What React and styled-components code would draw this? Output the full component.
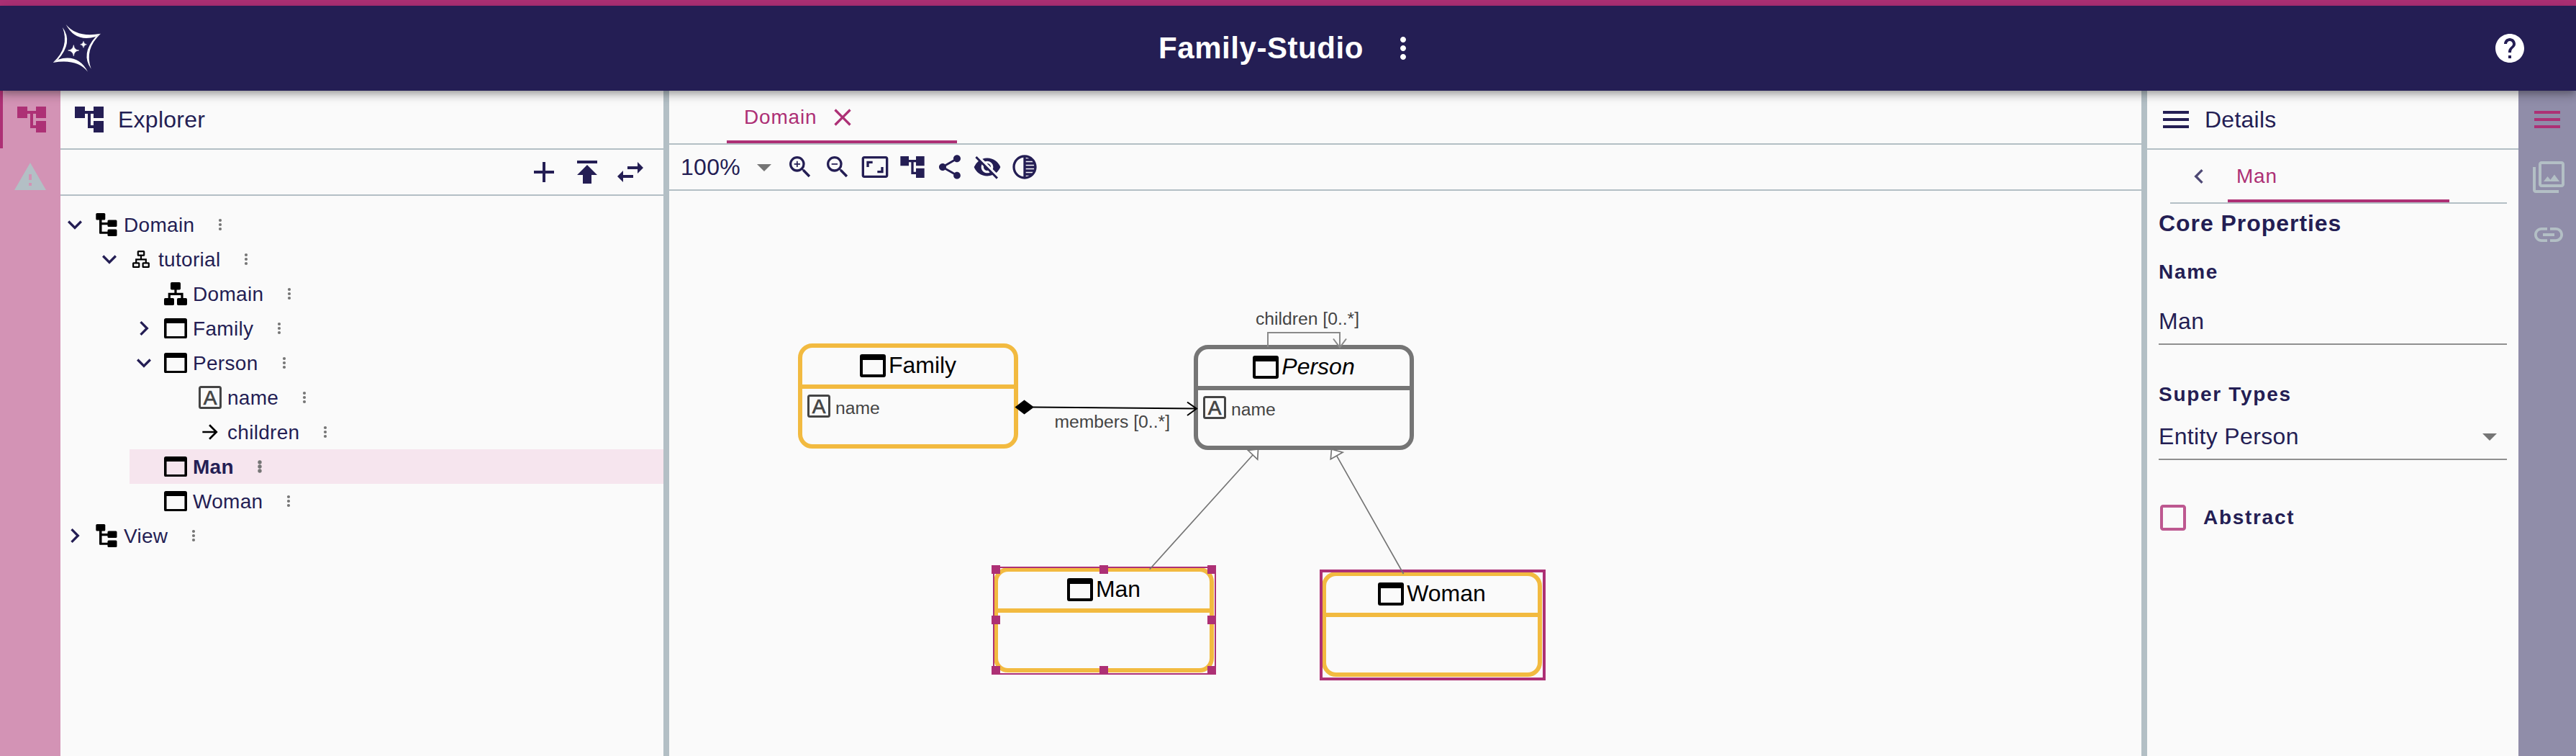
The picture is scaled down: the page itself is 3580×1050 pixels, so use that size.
import React from 'react';
import styled, { createGlobalStyle, css } from 'styled-components';
import {
  MdAccountTree, MdWarning, MdPublish, MdSwapHoriz, MdAdd, MdExpandMore, MdChevronRight,
  MdChevronLeft, MdMoreVert, MdHelp, MdClose, MdZoomIn, MdZoomOut, MdAspectRatio, MdShare,
  MdVisibilityOff, MdTonality, MdMenu, MdArrowDropDown, MdArrowForward, MdCheckBoxOutlineBlank,
} from 'react-icons/md';

const NAVY = '#241e54';
const PINK = '#ad3075';
const LINE = '#b3bfc5';
const BG = '#fafafa';
const GRAY = '#757575';
const YELLOW = '#f2ba40';
const INK = '#444444';

const GlobalStyle = createGlobalStyle`
  * { box-sizing: border-box; }
  body {
    margin: 0;
    background: ${BG};
    color: ${NAVY};
    font-family: Helvetica, "Liberation Sans", Arial, sans-serif;
    overflow: hidden;
  }
  svg { display: block; flex: none; }
`;

/* ---------- shell ---------- */

const Page = styled.div`
  display: flex;
  flex-direction: column;
  width: 3580px;
  height: 1050px;
  overflow: hidden;
`;

const TopStripe = styled.div`
  flex: none;
  height: 8px;
  background: ${PINK};
`;

const AppBar = styled.header`
  position: relative;
  z-index: 2;
  flex: none;
  display: grid;
  grid-template-columns: 1fr auto 1fr;
  align-items: center;
  height: 118px;
  padding: 0 68px 0 72px;
  background: ${NAVY};
  color: #fff;
  box-shadow: 0 4px 8px -2px rgba(0, 0, 0, 0.2), 0 8px 10px rgba(0, 0, 0, 0.14),
    0 2px 20px rgba(0, 0, 0, 0.12);
`;

const ProjectTitle = styled.div`
  display: flex;
  align-items: center;
  gap: 31px;
  font-size: 42px;
  font-weight: 700;
  letter-spacing: 0.55px;
  line-height: 64px;
`;

const HelpSlot = styled.div`
  justify-self: end;
`;

const Workbench = styled.main`
  flex: 1;
  display: flex;
  min-height: 0;
`;

const SideBar = styled.nav`
  flex: none;
  width: ${({ $right }) => ($right ? 80 : 84)}px;
  overflow: hidden;
  display: flex;
  flex-direction: column;
  background: ${({ $right }) => ($right ? '#908da9' : '#d393b5')};
`;

const SideButton = styled.div`
  flex: none;
  width: 84px;
  height: 80px;
  display: flex;
  align-items: center;
  justify-content: center;
  color: ${({ $active }) => ($active ? PINK : LINE)};
  ${({ $active, $right }) => $active && css`border-${$right ? 'right' : 'left'}: 4px solid ${PINK};`}
`;

const Splitter = styled.div`
  flex: none;
  width: 8px;
  background: ${LINE};
`;

const Panel = styled.section`
  flex: none;
  width: ${({ $width }) => $width}px;
  display: flex;
  flex-direction: column;
`;

const PanelHeader = styled.div`
  flex: none;
  display: flex;
  align-items: center;
  gap: 16px;
  height: 82px;
  padding-left: 16px;
  border-bottom: 2px solid ${LINE};
  font-size: 32px;
  letter-spacing: 0.25px;
`;

/* ---------- explorer ---------- */

const ExplorerToolbar = styled.div`
  flex: none;
  display: flex;
  justify-content: flex-end;
  align-items: center;
  gap: 12px;
  height: 64px;
  padding-right: 22px;
  border-bottom: 2px solid ${LINE};
`;

const Tree = styled.div`
  padding-top: 16px;
`;

const TreeRow = styled.div`
  display: flex;
  align-items: center;
  height: 48px;
  margin-left: ${({ $depth }) => $depth * 48}px;
  background: ${({ $selected }) => ($selected ? '#f6e5ee' : 'transparent')};
  font-weight: ${({ $selected }) => ($selected ? 700 : 400)};
  font-size: 28px;
  letter-spacing: 0.3px;
`;

const Toggle = styled.span`
  width: 48px;
  flex: none;
`;

const TreeIcon = styled.span`
  display: flex;
  justify-content: center;
  width: 32px;
  margin-right: 8px;
  color: #000;
`;

const TreeLabel = styled.span`
  margin-right: 24px;
  padding-top: 1px;
  line-height: 32px;
`;

/* ---------- editor ---------- */

const Editor = styled.section`
  flex: 1;
  display: flex;
  flex-direction: column;
  min-width: 0;
`;

const EditorTabs = styled.div`
  flex: none;
  display: flex;
  height: 75px;
  padding-left: 80px;
  border-bottom: 2px solid ${LINE};
`;

const Tab = styled.div`
  display: flex;
  align-items: center;
  gap: ${({ $gap }) => $gap || 0}px;
  width: ${({ $width }) => $width}px;
  height: 73px;
  padding: 4px 0 0 ${({ $pad }) => $pad}px;
  border-bottom: 4px solid ${PINK};
  color: ${PINK};
  font-size: 28px;
  letter-spacing: 0.8px;
`;

const EditorToolbar = styled.div`
  flex: none;
  display: flex;
  align-items: center;
  gap: 12px;
  height: 64px;
  padding-left: 16px;
  border-bottom: 2px solid ${LINE};
`;

const ZoomSelect = styled.div`
  display: flex;
  align-items: center;
  justify-content: space-between;
  width: 140px;
  margin-right: -6px;
  font-size: 32px;
  letter-spacing: 0.3px;
  svg { color: ${GRAY}; }
`;

/* ---------- diagram ---------- */

const Canvas = styled.div`
  position: relative;
  flex: 1;
  overflow: hidden;
`;

const Edges = styled.svg`
  position: absolute;
  inset: 0;
`;

const EdgeLabel = styled.div`
  position: absolute;
  left: ${({ $x }) => $x}px;
  top: ${({ $y }) => $y}px;
  font-size: 24.7px;
  line-height: 30px;
  white-space: nowrap;
  color: ${INK};
`;

const NodeBox = styled.div`
  position: absolute;
  left: ${({ $x }) => $x}px;
  top: ${({ $y }) => $y}px;
  width: 306px;
  height: 146px;
  border: 6px solid ${({ $color }) => $color};
  border-radius: 20px;
  background: ${BG};
`;

const NodeTitle = styled.div`
  display: flex;
  align-items: center;
  justify-content: center;
  gap: 4px;
  height: 57px;
  padding-bottom: 2px;
  border-bottom: 6px solid ${({ $color }) => $color};
  color: #000;
  font-size: 32px;
  font-style: ${({ $italic }) => ($italic ? 'italic' : 'normal')};
`;

const Attribute = styled.div`
  display: flex;
  align-items: center;
  gap: 7.5px;
  padding: 7px 0 0 6.5px;
  font-size: 24.7px;
  color: ${INK};
  span { padding-top: 6px; line-height: 28px; }
`;

const Outline = styled.div`
  position: absolute;
  left: ${({ $x }) => $x}px;
  top: ${({ $y }) => $y}px;
  width: ${({ $w }) => $w}px;
  height: ${({ $h }) => $h}px;
  border: ${({ $line }) => $line}px solid ${PINK};
`;

const Handle = styled.i`
  position: absolute;
  left: ${({ $x }) => $x}px;
  top: ${({ $y }) => $y}px;
  width: 12px;
  height: 12px;
  background: ${PINK};
`;

/* ---------- details ---------- */

const DetailsTabs = styled.div`
  flex: none;
  display: flex;
  height: 75px;
  margin: 0 16px 0 32px;
  border-bottom: 2px solid ${LINE};
`;

const ScrollButton = styled.div`
  display: flex;
  align-items: center;
  justify-content: center;
  width: 80px;
  opacity: 0.8;
`;

const Form = styled.div`
  display: flex;
  flex-direction: column;
  padding: 0 16px;
`;

const GroupTitle = styled.h2`
  margin: 0 0 21px;
  font-size: 32px;
  line-height: 54px;
  letter-spacing: 0.95px;
`;

const FieldLabel = styled.label`
  font-size: 28px;
  font-weight: 700;
  line-height: 40px;
  letter-spacing: 1.7px;
`;

const Field = styled.div`
  display: flex;
  align-items: center;
  justify-content: space-between;
  height: 64px;
  margin: ${({ $top, $bottom }) => `${$top}px 0 ${$bottom}px`};
  border-bottom: 2px solid #8f8f8f;
  font-size: 32px;
  letter-spacing: 0.35px;
  svg { color: ${GRAY}; }
`;

const CheckRow = styled.div`
  display: flex;
  align-items: center;
  gap: 18px;
  height: 48px;
  margin-left: -4px;
  svg { color: #bd5890; }
`;

/* ---------- drawn icons ---------- */

const Swoosh = () => (
  <>
    <path d="M275 102Q320 158 420 140L399 153Q315 178 275 102Z" />
    <path d="M420 140Q350 205 380 287Q335 225 399 153Z" />
  </>
);

const Logo = () => (
  <svg width="70" height="68" viewBox="216 99 210 204" fill="#fff">
    <Swoosh />
    <g transform="rotate(180 320.5 200.5)"><Swoosh /></g>
    <path d="M307 188Q309 208 329 210Q309 212 307 233Q304 212 284 210Q304 208 307 188Z" stroke="#fff" strokeWidth="2" />
    <path d="M348 172Q350 184 361 185.500Q350 187 348 199Q346 187 335 185.500Q346 184 348 172Z" stroke="#fff" strokeWidth="1.500" />
  </svg>
);

const WindowIcon = ({ width = 36 }) => (
  <svg width={width} height={(width * 16) / 18} viewBox="0 0 18 16">
    <path fillRule="evenodd" d="M1.500 0h15A1.500 1.500 0 0 1 18 1.500v13a1.500 1.500 0 0 1-1.500 1.500h-15A1.500 1.500 0 0 1 0 14.500v-13A1.500 1.500 0 0 1 1.500 0ZM2 4v10h14V4Z" />
  </svg>
);

const MoreDots = ({ radius = 2 }) => (
  <svg width="24" height="24" viewBox="0 0 24 24" fill={GRAY}>
    <circle cx="12" cy="6" r={radius} />
    <circle cx="12" cy="12" r={radius} />
    <circle cx="12" cy="18" r={radius} />
  </svg>
);

const AttributeIcon = () => (
  <svg width="32" height="32" viewBox="0 0 32 32">
    <rect x="1.500" y="1.500" width="29" height="29" rx="2" fill="none" stroke={INK} strokeWidth="3" />
    <text x="16" y="26" textAnchor="middle" fontSize="28" fontWeight="400" letterSpacing="0" fill={INK} stroke={INK} strokeWidth="0.700">A</text>
  </svg>
);

const ModelIcon = () => (
  <svg width="32" height="32" viewBox="0 0 32 32">
    <rect x="1.300" y="0" width="13" height="9.500" rx="1.500" />
    <rect x="17.500" y="9.500" width="13" height="9.500" rx="1.500" />
    <rect x="17.500" y="22.500" width="13" height="9.500" rx="1.500" />
    <path d="M6 8h3.500v5H18v3.300H9.500v9.500H18v3H7a1 1 0 0 1-1-1Z" />
  </svg>
);

const PackageIcon = () => (
  <svg width="24" height="24" viewBox="0 0 24 24" fill="none" stroke="#000" strokeWidth="2.200">
    <rect x="7.800" y="1.100" width="8.400" height="5.600" rx="0.500" />
    <rect x="1.100" y="17.300" width="8.200" height="5.600" rx="0.500" />
    <rect x="14.600" y="17.300" width="8.200" height="5.600" rx="0.500" />
    <path d="M12 7v5.300M5.200 17v-4.700h13.600V17" />
  </svg>
);

const DiagramIcon = () => (
  <svg width="32" height="32" viewBox="0 0 32 32">
    <rect x="9" y="0" width="14" height="10.500" rx="1.700" />
    <rect x="0" y="22" width="14" height="10" rx="1.700" />
    <rect x="18" y="22" width="14" height="10" rx="1.700" />
    <path d="M16 9v7.300M7.300 23v-6.700h17.700V23" fill="none" stroke="#000" strokeWidth="3.200" />
  </svg>
);

const GalleryIcon = () => (
  <svg width="48" height="48" viewBox="0 0 24 24" fill="currentColor">
    <path d="M15.960 10.290l-2.750 3.540-1.960-2.360L8.500 15h11l-3.540-4.710zM3 5H1v16c0 1.100.9 2 2 2h16v-2H3V5zm18-4H7c-1.100 0-2 .9-2 2v14c0 1.100.9 2 2 2h14c1.100 0 2-.9 2-2V3c0-1.100-.9-2-2-2zm0 16H7V3h14v14z" />
  </svg>
);

const LinkIcon = () => (
  <svg width="48" height="48" viewBox="0 0 24 24" fill="currentColor">
    <path d="M3.900 12c0-1.710 1.390-3.100 3.100-3.100h4V7H7c-2.760 0-5 2.240-5 5s2.240 5 5 5h4v-1.900H7c-1.710 0-3.100-1.390-3.100-3.100zM8 13h8v-2H8v2zm9-6h-4v1.900h4c1.710 0 3.100 1.390 3.100 3.100s-1.390 3.100-3.100 3.100h-4V17h4c2.760 0 5-2.240 5-5s-2.240-5-5-5z" />
  </svg>
);

/* ---------- data ---------- */

const SmallWindow = () => <WindowIcon width={32} />;
const Forward = () => <MdArrowForward size={32} />;

const rows = [
  { label: 'Domain', depth: 0, open: true, Icon: ModelIcon },
  { label: 'tutorial', depth: 1, open: true, Icon: PackageIcon },
  { label: 'Domain', depth: 2, Icon: DiagramIcon },
  { label: 'Family', depth: 2, open: false, Icon: SmallWindow },
  { label: 'Person', depth: 2, open: true, Icon: SmallWindow },
  { label: 'name', depth: 3, Icon: AttributeIcon },
  { label: 'children', depth: 3, Icon: Forward },
  { label: 'Man', depth: 2, Icon: SmallWindow, selected: true },
  { label: 'Woman', depth: 2, Icon: SmallWindow },
  { label: 'View', depth: 0, open: false, Icon: ModelIcon },
];

const nodes = [
  { label: 'Family', x: 179, y: 212, color: YELLOW, attribute: 'name' },
  { label: 'Person', x: 729, y: 214, color: GRAY, attribute: 'name', italic: true },
  { label: 'Man', x: 451, y: 523, color: YELLOW },
  { label: 'Woman', x: 907, y: 529, color: YELLOW },
];

const handles = [
  [448, 520], [598, 520], [748, 520], [448, 590], [748, 590], [448, 660], [598, 660], [748, 660],
];

const tools = [MdZoomIn, MdZoomOut, MdAspectRatio, MdAccountTree, MdShare, MdVisibilityOff, MdTonality];

/* ---------- views ---------- */

const Explorer = () => (
  <Panel $width={838}>
    <PanelHeader><MdAccountTree size={48} />Explorer</PanelHeader>
    <ExplorerToolbar>
      <MdAdd size={48} />
      <MdPublish size={48} />
      <MdSwapHoriz size={48} />
    </ExplorerToolbar>
    <Tree>
      {rows.map(({ label, depth, open, Icon, selected }, i) => (
        <TreeRow key={i} $depth={depth} $selected={selected}>
          <Toggle>
            {open === true && <MdExpandMore size={40} />}
            {open === false && <MdChevronRight size={40} />}
          </Toggle>
          <TreeIcon><Icon /></TreeIcon>
          <TreeLabel>{label}</TreeLabel>
          <MoreDots radius={selected ? 2.7 : 2.1} />
        </TreeRow>
      ))}
    </Tree>
  </Panel>
);

const Diagram = () => (
  <Canvas>
    {nodes.map(({ label, x, y, color, attribute, italic }) => (
      <NodeBox key={label} $x={x} $y={y} $color={color}>
        <NodeTitle $color={color} $italic={italic}><WindowIcon />{label}</NodeTitle>
        {attribute && <Attribute><AttributeIcon /><span>{attribute}</span></Attribute>}
      </NodeBox>
    ))}
    <Outline $x={450} $y={522} $w={310} $h={150} $line={2} />
    <Outline $x={904} $y={526} $w={314} $h={154} $line={4} />
    {handles.map(([x, y]) => <Handle key={`${x}-${y}`} $x={x} $y={y} />)}
    <Edges width="2046" height="785" viewBox="930 265 2046 785" fill="none">
      <path d="M1436 565.400L1662 567.600M1650 558.500L1663 567.600L1650 577" stroke="#000" strokeWidth="2" />
      <path d="M1410.500 565.400L1423.500 555.500L1437 565.400L1423.500 575.500Z" fill="#000" />
      <g stroke="#8a8a8a" strokeWidth="2">
        <path d="M1762 482V462H1862V482" />
        <path d="M1853 470.500L1862 482.500L1871 470.500" />
      </g>
      <g stroke={GRAY} strokeWidth="1.700">
        <path d="M1597.700 790.700L1741 632M1950.500 797L1857.700 633.200" />
        <path d="M1748.500 624L1734.500 625.500L1747.700 638Z" fill="#fff" />
        <path d="M1850.500 624L1866 628.300L1849.300 637.700Z" fill="#fff" />
      </g>
    </Edges>
    <EdgeLabel $x={535.5} $y={306}>members [0..*]</EdgeLabel>
    <EdgeLabel $x={815} $y={163}>children [0..*]</EdgeLabel>
  </Canvas>
);

const Details = () => (
  <Panel $width={516}>
    <PanelHeader><MdMenu size={48} />Details</PanelHeader>
    <DetailsTabs>
      <ScrollButton><MdChevronLeft size={40} /></ScrollButton>
      <Tab $width={308} $pad={12}>Man</Tab>
    </DetailsTabs>
    <Form>
      <GroupTitle>Core Properties</GroupTitle>
      <FieldLabel>Name</FieldLabel>
      <Field $top={17} $bottom={49}>Man</Field>
      <FieldLabel>Super Types</FieldLabel>
      <Field $top={7} $bottom={56}>Entity Person<MdArrowDropDown size={48} /></Field>
      <CheckRow><MdCheckBoxOutlineBlank size={48} /><FieldLabel>Abstract</FieldLabel></CheckRow>
    </Form>
  </Panel>
);

export default function App() {
  return (
    <>
      <GlobalStyle />
      <Page>
        <TopStripe />
        <AppBar>
          <Logo />
          <ProjectTitle>Family-Studio<MdMoreVert size={48} /></ProjectTitle>
          <HelpSlot><MdHelp size={48} /></HelpSlot>
        </AppBar>
        <Workbench>
          <SideBar>
            <SideButton $active><MdAccountTree size={48} /></SideButton>
            <SideButton><MdWarning size={48} /></SideButton>
          </SideBar>
          <Explorer />
          <Splitter />
          <Editor>
            <EditorTabs>
              <Tab $width={320} $pad={24} $gap={16}>Domain<MdClose size={40} /></Tab>
            </EditorTabs>
            <EditorToolbar>
              <ZoomSelect>100%<MdArrowDropDown size={48} /></ZoomSelect>
              {tools.map((Tool, i) => <Tool key={i} size={40} />)}
            </EditorToolbar>
            <Diagram />
          </Editor>
          <Splitter />
          <Details />
          <SideBar $right>
            <SideButton $active $right><MdMenu size={48} /></SideButton>
            <SideButton $right><GalleryIcon /></SideButton>
            <SideButton $right><LinkIcon /></SideButton>
          </SideBar>
        </Workbench>
      </Page>
    </>
  );
}
